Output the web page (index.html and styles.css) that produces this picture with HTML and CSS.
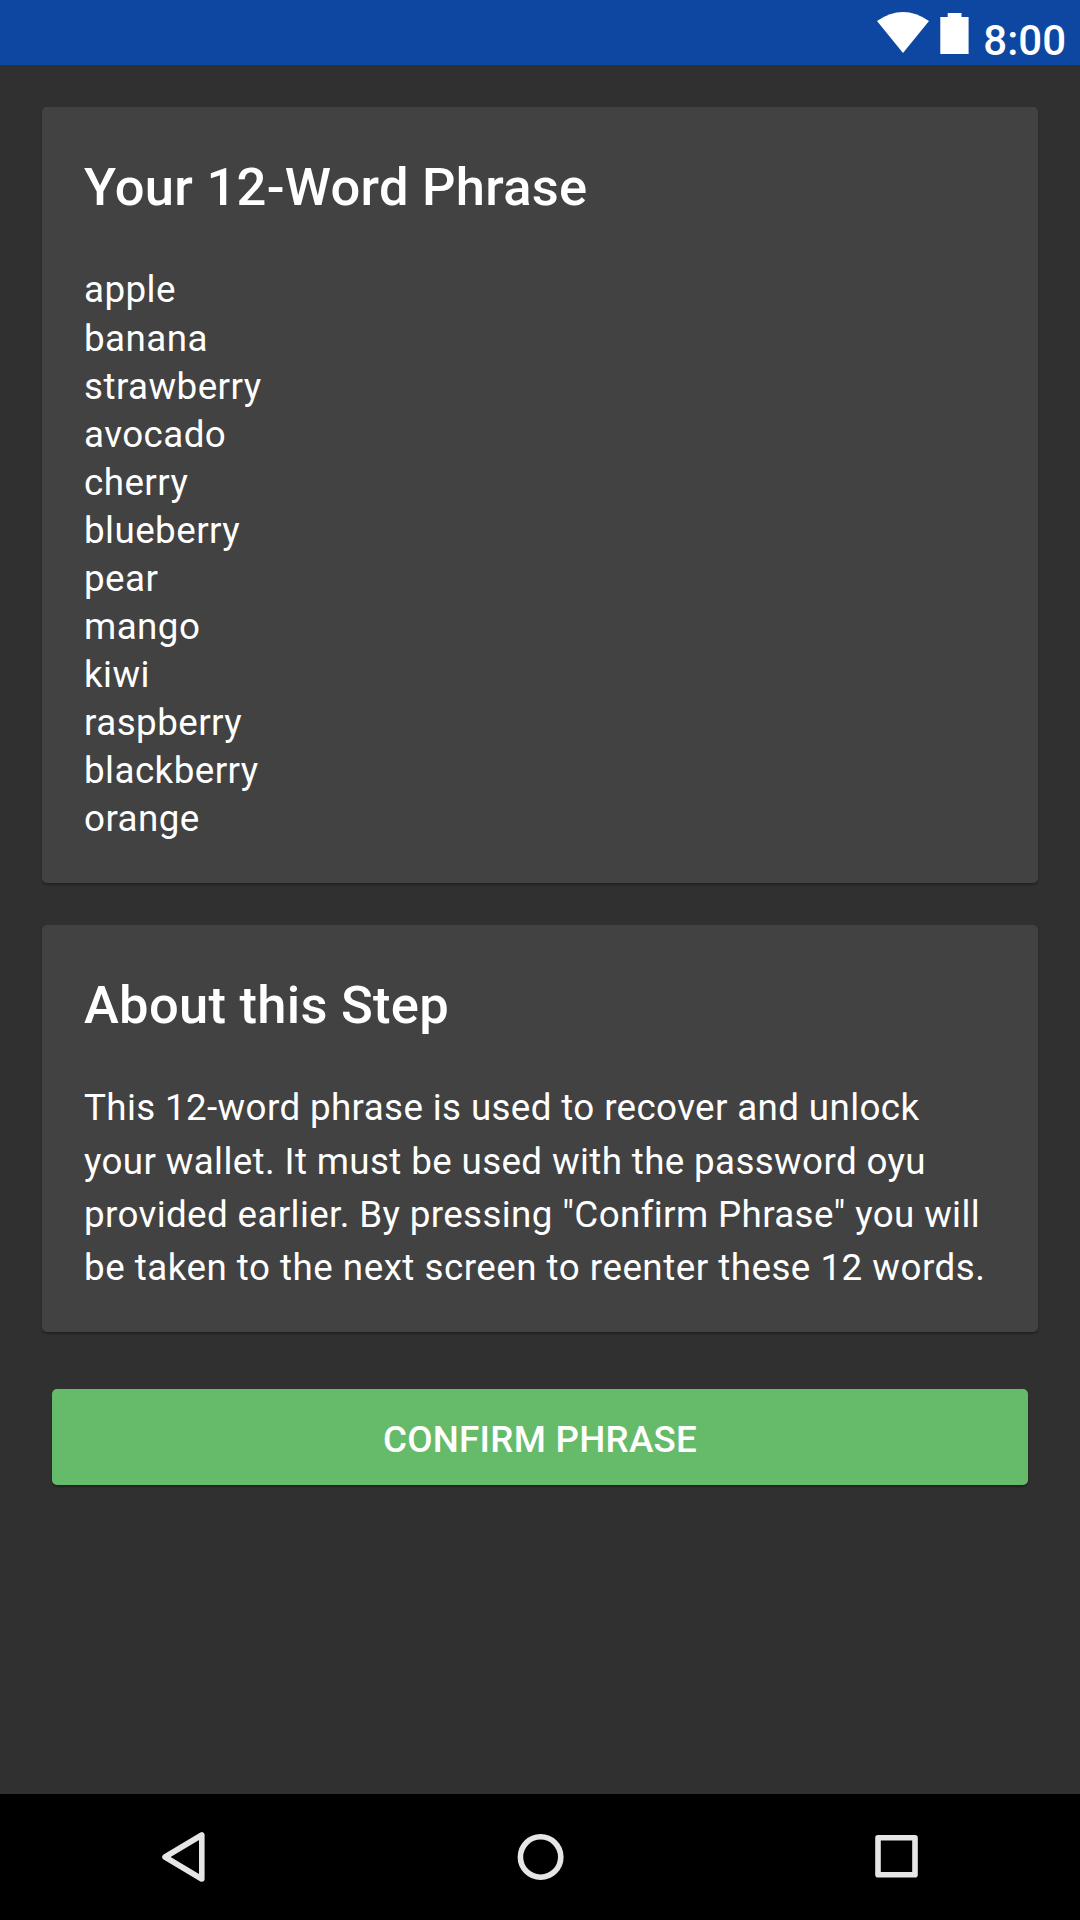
FILE: index.html
```html
<!DOCTYPE html>
<html lang="en">
<head>
<meta charset="utf-8">
<title>Your 12-Word Phrase</title>
<link rel="stylesheet" href="styles.css">
</head>
<body>
<header class="status">
  <svg class="wifi" width="52" height="41" viewBox="0 0 52 41"><path d="M0 9Q26-9 52 9L26 41Z"/></svg>
  <svg class="battery" width="29" height="42" viewBox="0 0 29 42"><path d="M.3 5H7.7V1H21.5V5H28.6V42H.3Z"/></svg>
  <span class="clock">8:00</span>
</header>
<main class="content">
  <section class="card">
    <h1 class="title">Your 12-Word Phrase</h1>
    <ul class="words">
      <li>apple</li>
      <li>banana</li>
      <li>strawberry</li>
      <li>avocado</li>
      <li>cherry</li>
      <li>blueberry</li>
      <li>pear</li>
      <li>mango</li>
      <li>kiwi</li>
      <li>raspberry</li>
      <li>blackberry</li>
      <li>orange</li>
    </ul>
  </section>
  <section class="card about">
    <h2 class="title">About this Step</h2>
    <p class="text">
      <span class="line">This 12-word phrase is used to recover and unlock</span>
      <span class="line">your wallet. It must be used with the password oyu</span>
      <span class="line">provided earlier. By pressing "Confirm Phrase" you will</span>
      <span class="line">be taken to the next screen to reenter these 12 words.</span>
    </p>
  </section>
  <button class="confirm">CONFIRM PHRASE</button>
</main>
<nav class="navbar">
  <svg width="60" height="60" viewBox="0 0 60 60"><path d="M48.8 8V52L12 30Z"/></svg>
  <svg width="60" height="60" viewBox="0 0 60 60"><circle cx="30.6" cy="30" r="20.2"/></svg>
  <svg width="60" height="60" viewBox="0 0 60 60"><rect x="11" y="10.8" width="37" height="37"/></svg>
</nav>
</body>
</html>
```
FILE: styles.css
```css
* { box-sizing: border-box; }
body { margin: 0; height: 1920px; display: flex; flex-direction: column; background: #303030; color: #fff; font-family: Roboto, sans-serif; }
.status { height: 65px; background: #0d47a1; display: flex; justify-content: flex-end; align-items: flex-start; padding: 12px 14px 0 0; }
.status svg { fill: #fff; }
.battery { margin: 0 14px 0 11px; }
.clock { font-size: 42px; font-weight: 500; line-height: 58px; }
.content { flex: 1; padding: 42px; display: flex; flex-direction: column; }
.card { height: 776px; background: #424242; border-radius: 5px; padding: 42px; box-shadow: 0 2px 2px rgba(0,0,0,.28); }
.about { height: 407px; margin-top: 42px; }
.title { margin: 0; font-size: 52.5px; font-weight: 500; line-height: 76px; padding-bottom: 2px; letter-spacing: .28px; }
.words { list-style: none; padding: 0; margin: 39px 0 0; font-size: 36.75px; line-height: 48px; letter-spacing: .45px; }
.words li:first-child { margin-bottom: 1px; }
.text { margin: 36px 0 0; font-size: 36.75px; line-height: 53px; letter-spacing: .37px; white-space: nowrap; }
.line { display: block; }
.line:first-child { margin-bottom: 1px; }
.line:last-child { letter-spacing: .49px; }
.confirm { height: 96px; margin: 57px 10px 0; padding: 5px 0 0; border: 0; border-radius: 5px; background: #66bb6a; color: #fff; font: 500 36.75px Roboto, sans-serif; letter-spacing: .26px; box-shadow: 0 2px 2px rgba(0,0,0,.28); }
.navbar { height: 126px; background: #000; display: flex; justify-content: space-between; align-items: center; padding: 0 153px; }
.navbar svg { fill: none; stroke: #e6e6e6; stroke-width: 5.6; stroke-linejoin: round; }
```
